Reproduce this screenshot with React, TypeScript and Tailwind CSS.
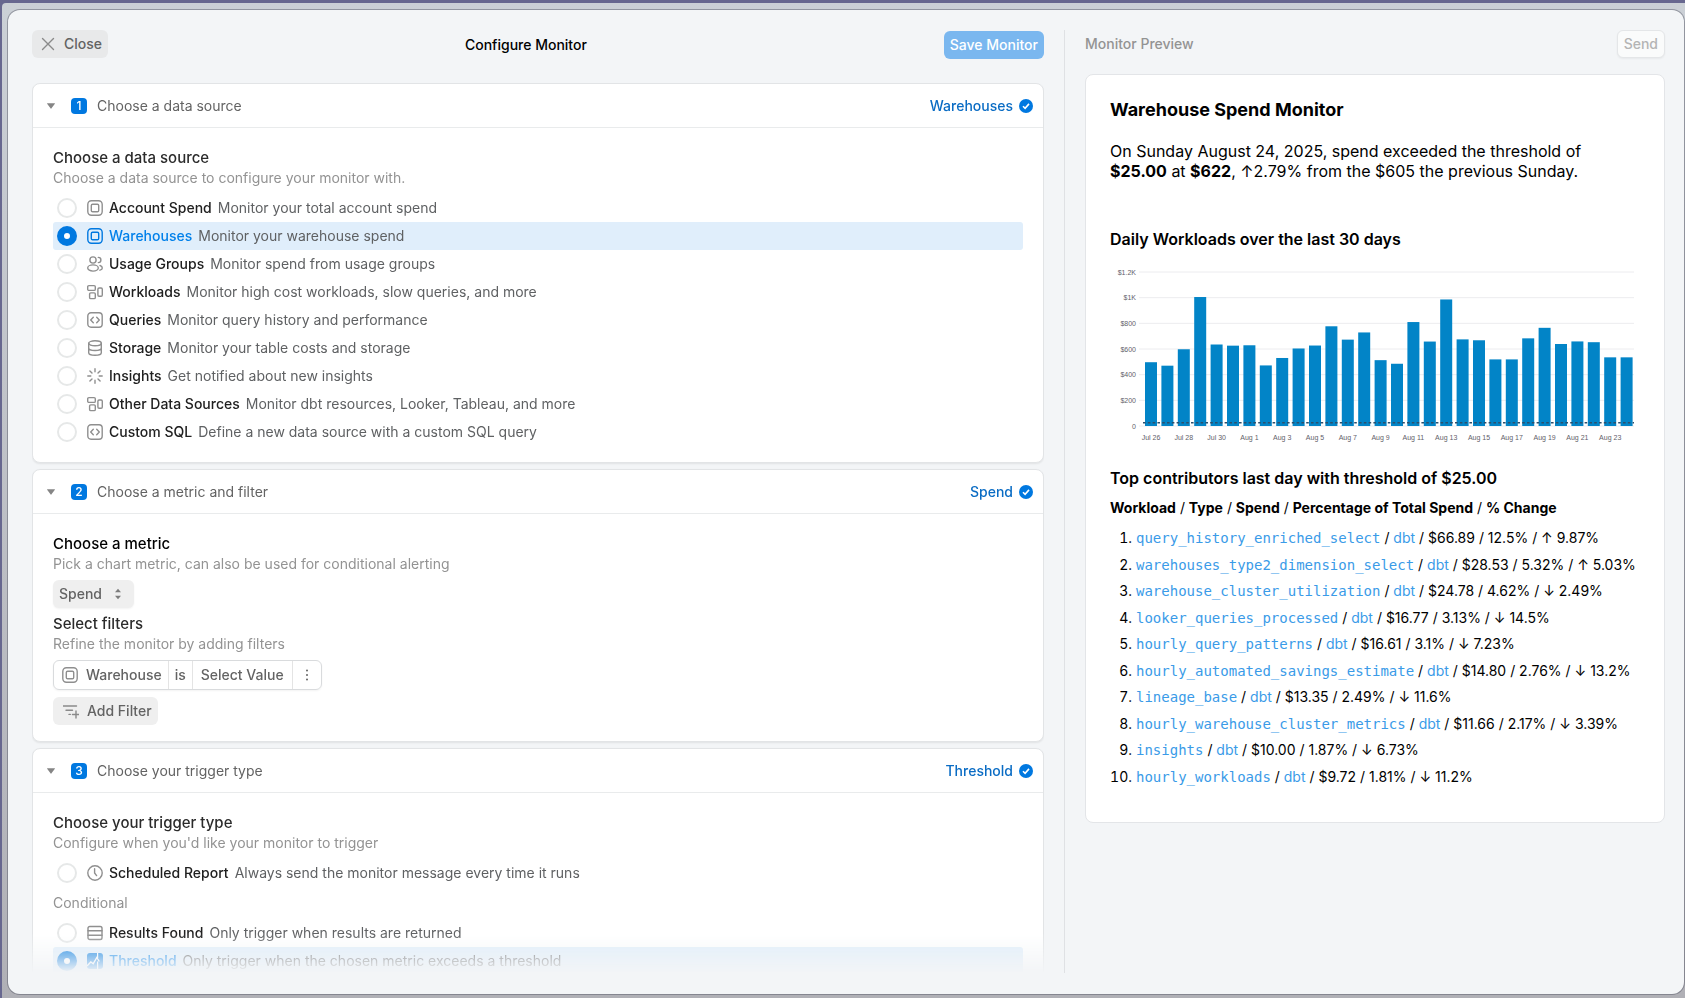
import type { ReactNode } from "react";

type IconProps = { className?: string };

function Svg({ className = "", children }: { className?: string; children: ReactNode }) {
  return (
    <svg
      viewBox="0 0 16 16"
      className={`size-4 shrink-0 ${className}`}
      fill="none"
      stroke="currentColor"
      strokeWidth="1.4"
      strokeLinecap="round"
      strokeLinejoin="round"
      aria-hidden="true"
    >
      {children}
    </svg>
  );
}

const WarehouseIcon = ({ className }: IconProps) => (
  <Svg className={className}>
    <rect x="0.8" y="0.8" width="14.4" height="14.4" rx="3.6" />
    <rect x="4.3" y="4.3" width="7.4" height="7.4" rx="1.3" />
  </Svg>
);

const UsersIcon = ({ className }: IconProps) => (
  <Svg className={className}>
    <circle cx="6" cy="4" r="3.1" />
    <ellipse cx="6" cy="12" rx="5.3" ry="3.1" />
    <path d="M11.300 1.400a2.600 2.600 0 0 1 0 5.200M13 9.500c1.400.4 2.300 1.300 2.300 2.400s-.9 1.900-2.300 2.300" />
  </Svg>
);

const WorkloadsIcon = ({ className }: IconProps) => (
  <Svg className={className}>
    <rect x="0.7" y="1.6" width="7.6" height="4.8" rx="1.2" />
    <rect x="2.6" y="8.9" width="5.700" height="5.7" rx="1.2" />
    <rect x="10.9" y="4" width="4.4" height="8.2" rx="1.2" />
  </Svg>
);

const CodeIcon = ({ className }: IconProps) => (
  <Svg className={className}>
    <rect x="0.8" y="0.8" width="14.4" height="14.4" rx="3.2" />
    <path d="M6.300 5.300 3.700 8l2.600 2.700M9.700 5.300 12.300 8l-2.600 2.700" />
  </Svg>
);

const StorageIcon = ({ className }: IconProps) => (
  <Svg className={className}>
    <ellipse cx="8" cy="3.3" rx="6.300" ry="2.5" />
    <path d="M1.700 3.300v9.400c0 1.400 2.800 2.500 6.300 2.500s6.300-1.100 6.300-2.500V3.300M1.700 8c0 1.400 2.800 2.500 6.300 2.500S14.300 9.400 14.300 8" />
  </Svg>
);

const InsightsIcon = ({ className }: IconProps) => (
  <Svg className={className}>
    <path d="M8 .8v3M8 12.200v3M.8 8h3M12.200 8h3M2.900 2.900 5 5M11 11l2.100 2.100M2.900 13.100 5 11M11 5l2.100-2.100" />
  </Svg>
);

const ClockIcon = ({ className }: IconProps) => (
  <Svg className={className}>
    <circle cx="8" cy="8" r="7.2" />
    <path d="M7.600 3.800V8l2 2.600" />
  </Svg>
);

const RowsIcon = ({ className }: IconProps) => (
  <Svg className={className}>
    <rect x="1" y="1.5" width="14" height="13" rx="1.8" />
    <path d="M1 5.800h14M1 10.200h14" />
  </Svg>
);

const ThresholdIcon = ({ className }: IconProps) => (
  <svg viewBox="0 0 16 16" className={`size-4 shrink-0 ${className ?? ""}`} aria-hidden="true">
    <rect width="16" height="16" rx="3" fill="currentColor" />
    <path d="M0 13 3.800 9l2.400 1.800L9.800 4.500l2.500 4" stroke="#fff" strokeWidth="1.4" fill="none" />
    <path d="M10.600 0v5M10.600 8.500V16" stroke="#fff" strokeWidth="1.2" />
  </svg>
);

function CheckBadge() {
  return (
    <svg viewBox="0 0 14 14" className="size-3.5 shrink-0" aria-hidden="true">
      <circle cx="7" cy="7" r="7" fill="#0078e0" />
      <path d="m4 7.200 2.100 2.100 3.900-4.400" fill="none" stroke="#fff" strokeWidth="1.6" />
    </svg>
  );
}

type Option = {
  name: string;
  detail: string;
  icon: (p: IconProps) => ReactNode;
};

const sources: Option[] = [
  { name: "Account Spend", detail: "Monitor your total account spend", icon: WarehouseIcon },
  { name: "Warehouses", detail: "Monitor your warehouse spend", icon: WarehouseIcon },
  { name: "Usage Groups", detail: "Monitor spend from usage groups", icon: UsersIcon },
  { name: "Workloads", detail: "Monitor high cost workloads, slow queries, and more", icon: WorkloadsIcon },
  { name: "Queries", detail: "Monitor query history and performance", icon: CodeIcon },
  { name: "Storage", detail: "Monitor your table costs and storage", icon: StorageIcon },
  { name: "Insights", detail: "Get notified about new insights", icon: InsightsIcon },
  { name: "Other Data Sources", detail: "Monitor dbt resources, Looker, Tableau, and more", icon: WorkloadsIcon },
  { name: "Custom SQL", detail: "Define a new data source with a custom SQL query", icon: CodeIcon },
];

function OptionRow({ option, group, checked = false }: { option: Option; group: string; checked?: boolean }) {
  const Icon = option.icon;
  return (
    <label className="group flex h-7 items-center rounded-[3px] pl-1 has-checked:bg-[#e0eefb]">
      <input
        type="radio"
        name={group}
        defaultChecked={checked}
        className="size-5 shrink-0 appearance-none rounded-full border-2 border-[#e6e8e8] bg-white checked:border-[7px] checked:border-[#0078e0]"
      />
      <Icon className="ml-2.5 text-[#8f8f8f] group-has-checked:text-[#0078e0]" />
      <span className="ml-1.5 font-medium text-[#202020] group-has-checked:text-[#0080ea]">{option.name}</span>
      <span className="ml-1.5 text-[#5f6163]">{option.detail}</span>
    </label>
  );
}

function Step({ index, title, value, children }: { index: number; title: string; value: string; children: ReactNode }) {
  return (
    <section className="rounded-lg border border-[#e2e4e6] bg-white shadow-[0_1px_2px_rgba(0,0,0,0.08)]">
      <header className="flex h-11 items-center border-b border-[#e9ebec] pr-2.5 pl-3">
        <button type="button" aria-label={`Toggle ${title}`} className="flex size-3 items-center justify-center text-[#858585]">
          <svg viewBox="0 0 8 6" className="h-1.5 w-2 shrink-0" aria-hidden="true">
            <path d="M.3.200h7.400a.3.300 0 0 1 .2.500L4.300 5.600a.4.400 0 0 1-.6 0L.1.700A.3.300 0 0 1 .3.200z" fill="currentColor" />
          </svg>
        </button>
        <span className="ml-3.5 flex size-4 items-center justify-center rounded-[4px] bg-[#0078e0] text-xs font-medium text-white">
          {index}
        </span>
        <span className="ml-2.5 text-[#636363]">{title}</span>
        <span className="mr-1.5 ml-auto font-medium text-[#0a6cc4]">{value}</span>
        <CheckBadge />
      </header>
      <div className="px-5 pt-5 pb-4">{children}</div>
    </section>
  );
}

function Intro({ title, text, dark = false }: { title: string; text: string; dark?: boolean }) {
  return (
    <div className="leading-5">
      <h2 className={dark ? "text-[15px] font-medium text-black" : "text-[15px] font-medium text-[#2b2b2b]"}>{title}</h2>
      <p className="text-[#939393]">{text}</p>
    </div>
  );
}

const spend = [
  497, 470, 598, 1005, 635, 626, 629, 472, 530, 604, 627, 777, 673, 729, 513, 485, 810, 658, 986, 675, 668, 519, 519,
  683, 765, 639, 659, 653, 535, 535,
];
const days = [
  "Jul 26", "Jul 28", "Jul 30", "Aug 1", "Aug 3", "Aug 5", "Aug 7", "Aug 9", "Aug 11", "Aug 13", "Aug 15", "Aug 17",
  "Aug 19", "Aug 21", "Aug 23",
];
const ticks = ["0", "$200", "$400", "$600", "$800", "$1K", "$1.2K"];

function SpendChart() {
  const base = 160;
  const unit = 154 / 1200;
  const pitch = 16.4;
  return (
    <svg
      viewBox="0 0 530 180"
      className="w-full"
      role="img"
      aria-label="Daily workloads"
      fontFamily="Liberation Sans, sans-serif"
      fontSize="7"
      fill="#5f616a"
    >
      {ticks.map((t, i) => {
        const y = base - i * 200 * unit;
        return (
          <g key={t}>
            <path d={`M29 ${y}H524`} stroke="#ececef" strokeWidth="1" />
            <text x="26" y={y + 2.5} textAnchor="end">{t}</text>
          </g>
        );
      })}
      {spend.map((v, i) => (
        <rect key={i} x={35 + i * pitch} y={base - v * unit} width="12" height={v * unit} fill="#0284c7" />
      ))}
      <path d={`M33 ${base - 25 * unit}H524`} stroke="#2d4f6c" strokeWidth="1.5" strokeDasharray="2.6 2.2" />
      {days.map((d, i) => (
        <text key={d} x={41 + i * 2 * pitch} y="173.5" textAnchor="middle">{d}</text>
      ))}
    </svg>
  );
}

const contributors = [
  ["query_history_enriched_select", "$66.89 / 12.5% / ↑ 9.87%"],
  ["warehouses_type2_dimension_select", "$28.53 / 5.32% / ↑ 5.03%"],
  ["warehouse_cluster_utilization", "$24.78 / 4.62% / ↓ 2.49%"],
  ["looker_queries_processed", "$16.77 / 3.13% / ↓ 14.5%"],
  ["hourly_query_patterns", "$16.61 / 3.1% / ↓ 7.23%"],
  ["hourly_automated_savings_estimate", "$14.80 / 2.76% / ↓ 13.2%"],
  ["lineage_base", "$13.35 / 2.49% / ↓ 11.6%"],
  ["hourly_warehouse_cluster_metrics", "$11.66 / 2.17% / ↓ 3.39%"],
  ["insights", "$10.00 / 1.87% / ↓ 6.73%"],
  ["hourly_workloads", "$9.72 / 1.81% / ↓ 11.2%"],
];

function Preview() {
  return (
    <article className="rounded-lg border border-[#e3e5e8] bg-white px-6 pt-[22px] pb-8 text-black">
      <h1 className="text-lg leading-[26px] font-bold">Warehouse Spend Monitor</h1>
      <p className="mt-[18px] text-base leading-5">
        On Sunday August 24, 2025, spend exceeded the threshold of <strong>$25.00</strong> at <strong>$622</strong>,
        ↑2.79% from the $605 the previous Sunday.
      </p>
      <h2 className="mt-12 text-base leading-5 font-semibold">Daily Workloads over the last 30 days</h2>
      <div className="mt-[17px]">
        <SpendChart />
      </div>
      <h2 className="mt-[22px] text-base leading-5 font-semibold">Top contributors last day with threshold of $25.00</h2>
      <p className="mt-2.5 leading-5">
        <b>Workload</b> / <b>Type</b> / <b>Spend</b> / <b>Percentage of Total Spend</b> / <b>% Change</b>
      </p>
      <ol className="mt-[7px]">
        {contributors.map(([name, stats], i) => (
          <li key={name} className="flex leading-[26px] odd:pb-px">
            <span className="flex w-[22px] shrink-0 justify-end whitespace-nowrap tabular-nums">{i + 1}.</span>
            <span className="ml-1 whitespace-nowrap">
              <a href="#workload" className="font-['DejaVu_Sans_Mono',monospace] text-[#3a9be8]">{name}</a> /{" "}
              <a href="#dbt" className="text-[#3a9be8]">dbt</a> / {stats}
            </span>
          </li>
        ))}
      </ol>
    </article>
  );
}

export default function App() {
  return (
    <div className="h-screen overflow-hidden bg-[#67678f] pt-[3px] pl-0.5 font-['Inter',sans-serif] text-sm">
      <div className="h-full rounded-tl-[4px] bg-linear-to-b from-[#cbd0d6] to-[#b0b0b6] pt-[7px] pr-px pb-1 pl-1.5">
        <main className="flex h-full rounded-xl bg-[#f3f5f7] shadow-[0_0_0_1px_rgba(90,92,105,0.5)]">
          <div className="relative flex min-w-0 flex-1 flex-col pt-5 pr-5 pl-6">
            <header className="flex h-[29px] items-end justify-between">
              <button type="button" className="flex h-7 items-center gap-2 self-start rounded-md bg-[#e8e9ea] pr-1.5 pl-2 font-medium text-[#636363]">
                <Svg className="text-[#8a8a8a]">
                  <path d="M2.500 2.500l11 11M13.500 2.500l-11 11" />
                </Svg>
                Close
              </button>
              <h1 className="font-medium leading-7 text-black">Configure Monitor</h1>
              <button type="button" className="h-7 rounded-md bg-[#7ab7ef] px-1.5 font-medium text-white">Save Monitor</button>
            </header>
            <div className="mt-6 mb-[21px] flex min-h-0 flex-1 flex-col gap-1.5 overflow-hidden mask-b-from-[calc(100%-40px)] mask-b-to-100%">
              <Step index={1} title="Choose a data source" value="Warehouses">
                <Intro title="Choose a data source" text="Choose a data source to configure your monitor with." />
                <div className="mt-1.5">
                  {sources.map((s) => (
                    <OptionRow key={s.name} option={s} group="source" checked={s.name === "Warehouses"} />
                  ))}
                </div>
              </Step>
              <Step index={2} title="Choose a metric and filter" value="Spend">
                <Intro dark title="Choose a metric" text="Pick a chart metric, can also be used for conditional alerting" />
                <button type="button" className="mt-1.5 flex h-7 items-center gap-2.5 rounded-md bg-[#efefef] pr-2.5 pl-1.5 font-medium text-[#636363] shadow-xs">
                  Spend
                  <svg viewBox="0 0 12 12" className="size-3" fill="#7c7c7c" aria-hidden="true">
                    <path d="M3 4.200 6 .8l3 3.400zM3 7.800l3 3.400 3-3.400z" />
                  </svg>
                </button>
                <div className="mt-1.5">
                  <Intro title="Select filters" text="Refine the monitor by adding filters" />
                </div>
                <div className="mt-1.5 flex h-[30px] w-fit items-stretch divide-x divide-[#e4e4e4] rounded-md border border-[#d9dbdd] font-medium text-[#636363] shadow-xs">
                  <button type="button" className="flex items-center gap-2 pr-1.5 pl-2">
                    <WarehouseIcon className="text-[#8f8f8f]" />
                    Warehouse
                  </button>
                  <button type="button" className="px-1.5">is</button>
                  <button type="button" className="px-2">Select Value</button>
                  <button type="button" aria-label="Filter options" className="px-1.5">
                    <svg viewBox="0 0 16 16" className="size-4" fill="#636363" aria-hidden="true">
                      <circle cx="8" cy="3.5" r="1" />
                      <circle cx="8" cy="8" r="1" />
                      <circle cx="8" cy="12.5" r="1" />
                    </svg>
                  </button>
                </div>
                <button type="button" className="mt-[7px] flex h-7 items-center gap-2 rounded-md bg-[#efefef] pr-1.5 pl-2.5 font-medium text-[#636363]">
                  <Svg className="text-[#8a8a8a]">
                    <path d="M0 3h13.500M3 7.200h6.500M6 11.400h1.300M13 8v7M9.500 11.500h7" />
                  </Svg>
                  Add Filter
                </button>
              </Step>
              <Step index={3} title="Choose your trigger type" value="Threshold">
                <Intro title="Choose your trigger type" text="Configure when you'd like your monitor to trigger" />
                <div className="mt-1.5">
                  <OptionRow group="trigger" option={{ name: "Scheduled Report", detail: "Always send the monitor message every time it runs", icon: ClockIcon }} />
                  <p className="py-1.5 leading-5 text-[#939393]">Conditional</p>
                  <OptionRow group="trigger" option={{ name: "Results Found", detail: "Only trigger when results are returned", icon: RowsIcon }} />
                  <OptionRow group="trigger" checked option={{ name: "Threshold", detail: "Only trigger when the chosen metric exceeds a threshold", icon: ThresholdIcon }} />
                </div>
              </Step>
            </div>
          </div>
          <aside className="mt-5 mb-[21px] w-[620px] shrink-0 border-l border-[#dfe1e4] pr-[19px] pl-5">
            <header className="mb-4 flex items-center justify-between">
              <h2 className="font-medium text-[#939393]">Monitor Preview</h2>
              <button type="button" className="h-7 rounded-md border border-[#e4e6e8] bg-[#fafbfb] px-1.5 font-medium text-[#b4b4b4] shadow-xs">Send</button>
            </header>
            <Preview />
          </aside>
        </main>
      </div>
    </div>
  );
}
